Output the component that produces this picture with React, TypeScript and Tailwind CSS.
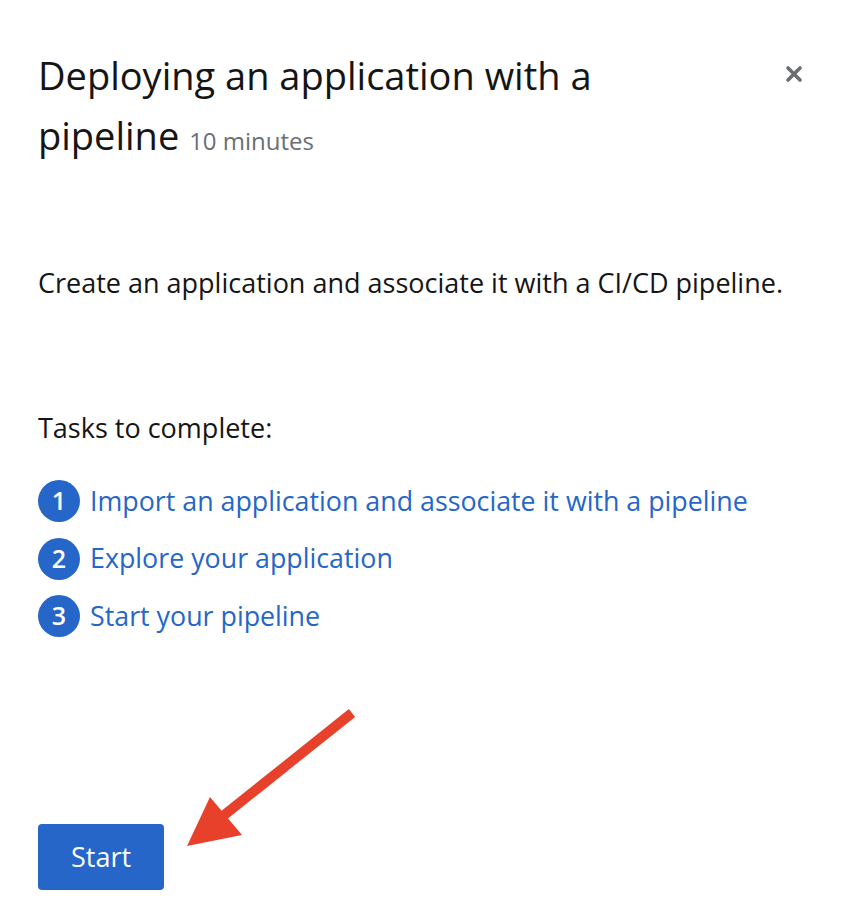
import React from "react";

const tasks = [
  "Import an application and associate it with a pipeline",
  "Explore your application",
  "Start your pipeline",
];

export default function App() {
  return (
    <div
      className="relative w-[864px] h-[902px] bg-white text-[#151515] overflow-hidden"
      style={{ fontFamily: '"Open Sans", "Noto Sans", sans-serif' }}
    >
      <div className="flex flex-col pl-[38px] pr-[38px]">
        <div className="flex items-start justify-between mt-[45px]">
          <h1 className="w-[660px] h-[120px] text-[38px] leading-[60px] font-medium text-[#151515]">
            Deploying an application with a pipeline{" "}
            <span className="text-[24px] leading-none font-normal text-[#6a6e73]">10 minutes</span>
          </h1>
          <button className="mt-[20px] mr-[23px] w-[18px] h-[18px] flex items-center justify-center">
            <svg width="18" height="18" viewBox="0 0 18 18">
              <path d="M3 3 L15 15 M15 3 L3 15" stroke="#6a6e73" strokeWidth="3.6" strokeLinecap="round" />
            </svg>
          </button>
        </div>
        <p className="mt-[100px] text-[27px] leading-[36px] text-[#151515]">
          Create an application and associate it with a CI/CD pipeline.
        </p>
        <p className="mt-[109px] text-[27px] leading-[36px] text-[#151515]">Tasks to complete:</p>
        <ul className="mt-[34px] flex flex-col gap-[15.5px]">
          {tasks.map((t, i) => (
            <li key={t} className="flex items-center gap-[10px] h-[42px]">
              <span className="w-[42px] h-[42px] rounded-full bg-[#2566c8] text-white flex items-center justify-center text-[25px] font-semibold">
                {i + 1}
              </span>
              <a className="text-[26.8px] text-[#2566c8] font-medium">{t}</a>
            </li>
          ))}
        </ul>
        <div className="mt-[187px]">
          <button className="w-[126px] h-[66px] rounded-[4px] bg-[#2566c8] text-white text-[27px]">
            Start
          </button>
        </div>
      </div>
      <svg className="absolute left-0 top-0 pointer-events-none" width="864" height="902">
        <line x1="352" y1="713" x2="218" y2="820" stroke="#e8412b" strokeWidth="10" />
        <polygon points="187,846 210,797 242,835" fill="#e8412b" />
      </svg>
    </div>
  );
}
